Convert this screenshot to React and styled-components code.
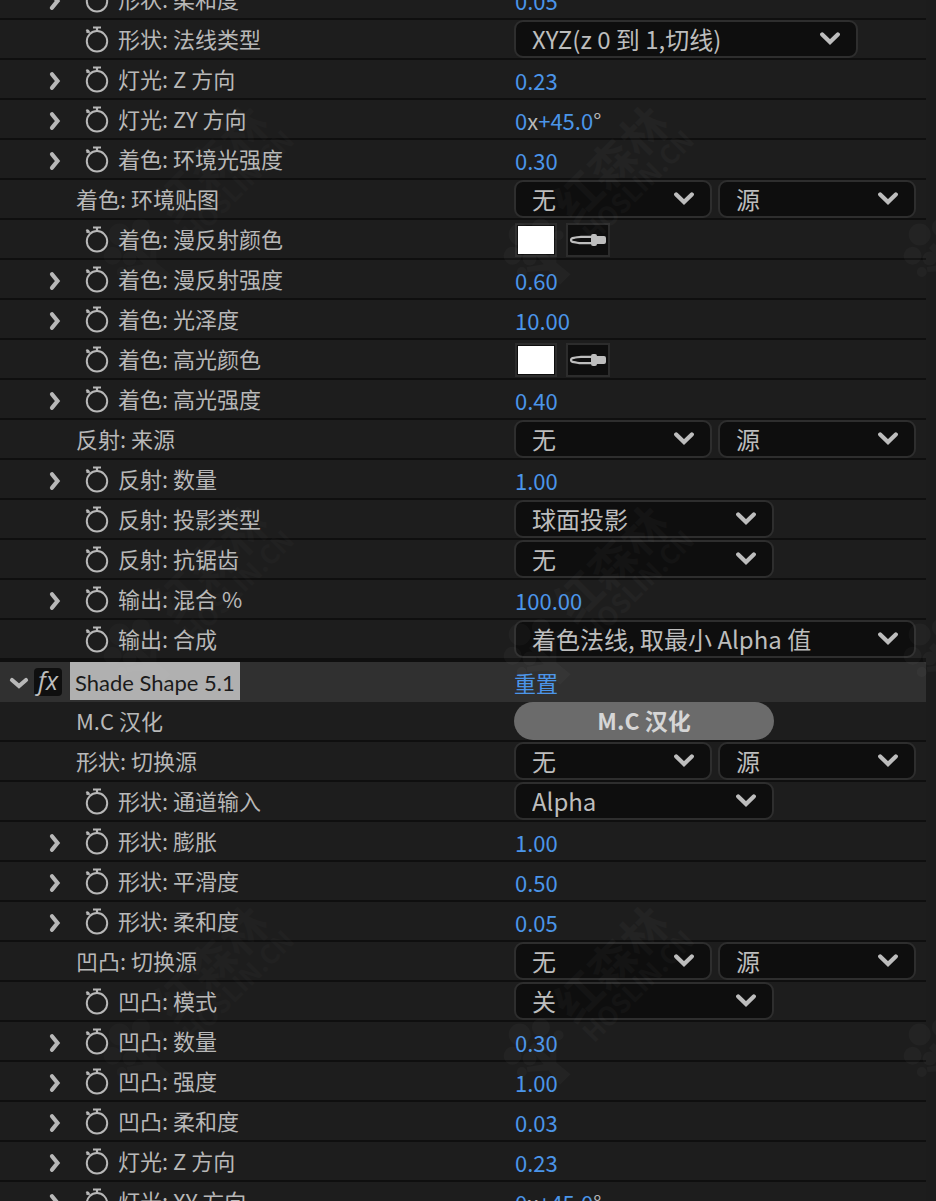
import React, { useState } from 'react';
import styled, { createGlobalStyle } from 'styled-components';

const GlobalStyle = createGlobalStyle`
  * {
    box-sizing: border-box;
  }

  body {
    margin: 0;
    background: #1c1c1c;
    color: #b8b8b8;
    font-family: "Noto Sans CJK SC", sans-serif;
    font-size: 22px;
  }

  button, select, input {
    font: inherit;
    color: inherit;
    margin: 0;
    padding: 0;
    border: 0;
    background: none;
  }
`

const Panel = styled.main`
  position: relative;
  height: 100vh;
  overflow: hidden;
  padding-right: 10px;
`

// the list is scrolled by half a row
const List = styled.div`
  margin-top: -20px;
`

const Row = styled.div`
  display: grid;
  grid-template-columns: 514px 1fr;
  height: 40px;
  background: #1d1d1d;
  border-bottom: 2px solid #0f0f0f;
`

const NameCell = styled.div`
  display: flex;
  align-items: center;
  padding-left: ${props => props.$plain ? '76px' : '48px'};
`

const ValueCell = styled.div`
  display: flex;
  align-items: center;
  gap: ${props => props.$gap || '0'};
  padding: ${props => props.$pad || '0'};
`

const Twirl = styled.button`
  display: flex;
  width: 36px;
  height: 24px;
  visibility: ${props => props.$hidden ? 'hidden' : 'visible'};
`

const Stopwatch = styled.button`
  display: flex;
  width: 34px;
  height: 28px;
`

const Name = styled.label`
  padding-bottom: 2px;
  line-height: 36px;
  white-space: pre;
`

const HotText = styled.button`
  color: #4b95e9;
  line-height: 30px;
  padding-top: 2px;
  cursor: ew-resize;
`

const Unit = styled.span`
  line-height: 30px;
  padding-top: 2px;
`

const SelectBox = styled.span`
  display: grid;
  width: ${props => props.$width};
  height: 38px;
  align-items: center;
`

const SelectInput = styled.select`
  grid-area: 1 / 1;
  appearance: none;
  width: 100%;
  height: 38px;
  padding: 0 48px 0 16px;
  border: 2px solid #2e2e2e;
  border-radius: 9px;
  background: #0e0e0e;
  color: #bdbdbd;
  font-size: 24px;
  line-height: 34px;
`

const SelectArrow = styled.svg`
  grid-area: 1 / 1;
  justify-self: end;
  margin-right: 18px;
  pointer-events: none;
`

const Swatch = styled.input`
  appearance: none;
  width: 42px;
  height: 34px;
  padding: 1px;
  border: 2px solid #2c2c2c;
  background: #0e0e0e;

  &::-webkit-color-swatch-wrapper {
    padding: 0;
  }

  &::-webkit-color-swatch {
    border: 0;
    border-radius: 0;
  }
`

const Eyedropper = styled.button`
  display: flex;
  align-items: center;
  justify-content: center;
  width: 44px;
  height: 34px;
  border: 2px solid #2c2c2c;
  background: #0e0e0e;
`

const PillButton = styled.button`
  width: 260px;
  height: 38px;
  padding-bottom: 2px;
  border-radius: 19px;
  background: #6b6b6b;
  color: #d6d6d6;
  font-size: 23px;
  font-weight: 700;
  line-height: 36px;
`

const EffectRow = styled.div`
  display: grid;
  grid-template-columns: 514px 1fr;
  height: 42px;
  background: #303030;
  border-top: 2px solid #0f0f0f;
`

const EffectHead = styled.div`
  display: flex;
  padding-left: 9px;
`

const EffectTwirl = styled.button`
  display: flex;
  align-items: center;
  width: 25px;
  height: 42px;
`

const FxBadge = styled.button`
  width: 28px;
  height: 28px;
  margin: 6px 8px 0 0;
  padding-bottom: 4px;
  border-radius: 4px;
  background: #0f0f0f;
  color: #bdbdbd;
  font-family: "Open Sans", sans-serif;
  font-size: 25px;
  font-style: italic;
  line-height: 24px;
`

const EffectName = styled.h2`
  margin: 0;
  height: 38px;
  padding: 0 5px;
  background: #b0b0b0;
  color: #1b1b1b;
  font-family: Lato, sans-serif;
  font-size: 22px;
  font-weight: 400;
  line-height: 42px;
  white-space: nowrap;
`

const Mark = styled.div`
  position: absolute;
  left: ${props => props.$x}px;
  top: ${props => props.$y}px;
  width: 250px;
  height: 80px;
  display: flex;
  align-items: center;
  gap: 8px;
  transform: rotate(-45deg);
  opacity: ${props => props.$opacity};
  color: #fff;
  pointer-events: none;
  user-select: none;
`

const MarkText = styled.div`
  font-size: 46px;
  font-weight: 700;
  line-height: 44px;
`

const MarkUrl = styled.div`
  font-size: 26px;
  font-weight: 700;
  line-height: 28px;
`

const ChevronRight = () => (
  <svg width="14" height="24" viewBox="0 0 14 24" fill="none" stroke="#b8b8b8" strokeWidth="4.200" strokeLinecap="round">
    <path d="M4 7.200 L9.500 14 L4 20.800" />
  </svg>
)

const StopwatchIcon = () => (
  <svg width="28" height="28" viewBox="0 0 28 28" fill="none" stroke="#b8b8b8" strokeWidth="2">
    <circle cx="13" cy="16.300" r="10.200" />
    <path d="M9 2.500 H17 M13 2 V6" strokeWidth="2.200" />
    <path d="M2.400 4.600 L5.600 7.800 M2.600 7.600 L5 5.200" />
  </svg>
)

const ArrowDown = () => (
  <SelectArrow width="20" height="14" viewBox="0 0 20 14" fill="none" stroke="#bdbdbd" strokeWidth="4.200" strokeLinecap="round">
    <path d="M2.200 2.400 L10 10 L17.800 2.400" />
  </SelectArrow>
)

const DropperIcon = () => (
  <svg width="38" height="14" viewBox="0 0 38 14">
    <path d="M22 3.800 H12 C9 3.800 8 4.600 5 4.800 Q2 5 2 7 Q2 9 5 9.200 C8 9.400 9 10.200 12 10.200 H22" fill="none" stroke="#bdbdbd" strokeWidth="2.200" />
    <path d="M22 3 q0 -2 2 -2 h2 q2 0 2 2 h7 q2 0 2 2 v4 q0 2 -2 2 h-7 q0 2 -2 2 h-2 q-2 0 -2 -2 z" fill="#bdbdbd" />
  </svg>
)

const Dropdown = ({ id, label, value, width }) => (
  <SelectBox $width={width}>
    <SelectInput id={id} aria-label={label} defaultValue={value}>
      <option>{value}</option>
    </SelectInput>
    <ArrowDown />
  </SelectBox>
)

const Watermark = ({ x, y, opacity }) => (
  <Mark $x={x} $y={y} $opacity={opacity} aria-hidden="true">
    <svg width="74" height="80" viewBox="0 0 70 80" fill="#fff">
      <circle cx="34" cy="14" r="11" />
      <circle cx="14" cy="24" r="9" />
      <circle cx="54" cy="24" r="9" />
      <circle cx="24" cy="38" r="7" />
      <circle cx="45" cy="38" r="7" />
      <circle cx="9" cy="42" r="5" />
      <circle cx="61" cy="42" r="5" />
      <path d="M31 30 h7 l1 22 l14 -12 l3 4 l-16 16 l2 18 h-15 l2 -18 l-16 -14 l3 -4 l14 10 z" />
    </svg>
    <div>
      <MarkText>红森林</MarkText>
      <MarkUrl>HOSLIN.CN</MarkUrl>
    </div>
  </Mark>
)

const Value = ({ id, row }) => {
  const [color, setColor] = useState('#ffffff');

  switch (row.type) {
    case 'number':
      return <HotText id={id}>{row.value}</HotText>
    case 'angle':
      return (
        <>
          <HotText id={id}>0</HotText>
          <Unit>x</Unit>
          <HotText>+45.0</HotText>
          <Unit>°</Unit>
        </>
      )
    case 'layer':
      return (
        <>
          <Dropdown id={id} label={row.name} value="无" width="198px" />
          <Dropdown id={id + '-source'} label={row.name + ' 源'} value="源" width="198px" />
        </>
      )
    case 'color':
      return (
        <>
          <Swatch id={id} type="color" value={color} onChange={e => setColor(e.target.value)} />
          <Eyedropper aria-label="吸管"><DropperIcon /></Eyedropper>
        </>
      )
    case 'button':
      return <PillButton id={id}>{row.value}</PillButton>
    default:
      return <Dropdown id={id} label={row.name} value={row.value} width={row.width} />
  }
}

const gaps = { layer: '6px', color: '9px' }
const pads = { number: '0 0 0 1px', angle: '0 0 0 1px', color: '2px 0 0 1px' }

const Property = ({ id, row }) => {
  const plain = row.type === 'layer' || row.type === 'button';
  const scrub = row.type === 'number' || row.type === 'angle';

  return (
    <Row>
      <NameCell $plain={plain}>
        {!plain && (
          <>
            <Twirl $hidden={!scrub} aria-label="展开" aria-expanded="false"><ChevronRight /></Twirl>
            <Stopwatch aria-label="关键帧"><StopwatchIcon /></Stopwatch>
          </>
        )}
        <Name htmlFor={id}>{row.name}</Name>
      </NameCell>
      <ValueCell $gap={gaps[row.type]} $pad={pads[row.type]}>
        <Value id={id} row={row} />
      </ValueCell>
    </Row>
  )
}

const firstEffect = [
  { name: '形状: 柔和度', type: 'number', value: '0.05' },
  { name: '形状: 法线类型', type: 'select', value: 'XYZ(z 0 到 1,切线)', width: '344px' },
  { name: '灯光: Z 方向', type: 'number', value: '0.23' },
  { name: '灯光: ZY 方向', type: 'angle' },
  { name: '着色: 环境光强度', type: 'number', value: '0.30' },
  { name: '着色: 环境贴图', type: 'layer' },
  { name: '着色: 漫反射颜色', type: 'color' },
  { name: '着色: 漫反射强度', type: 'number', value: '0.60' },
  { name: '着色: 光泽度', type: 'number', value: '10.00' },
  { name: '着色: 高光颜色', type: 'color' },
  { name: '着色: 高光强度', type: 'number', value: '0.40' },
  { name: '反射: 来源', type: 'layer' },
  { name: '反射: 数量', type: 'number', value: '1.00' },
  { name: '反射: 投影类型', type: 'select', value: '球面投影', width: '260px' },
  { name: '反射: 抗锯齿', type: 'select', value: '无', width: '260px' },
  { name: '输出: 混合 %', type: 'number', value: '100.00' },
  { name: '输出: 合成', type: 'select', value: '着色法线, 取最小 Alpha 值', width: '402px' },
]

const secondEffect = [
  { name: 'M.C 汉化', type: 'button', value: 'M.C 汉化' },
  { name: '形状: 切换源', type: 'layer' },
  { name: '形状: 通道输入', type: 'select', value: 'Alpha', width: '260px' },
  { name: '形状: 膨胀', type: 'number', value: '1.00' },
  { name: '形状: 平滑度', type: 'number', value: '0.50' },
  { name: '形状: 柔和度', type: 'number', value: '0.05' },
  { name: '凹凸: 切换源', type: 'layer' },
  { name: '凹凸: 模式', type: 'select', value: '关', width: '260px' },
  { name: '凹凸: 数量', type: 'number', value: '0.30' },
  { name: '凹凸: 强度', type: 'number', value: '1.00' },
  { name: '凹凸: 柔和度', type: 'number', value: '0.03' },
  { name: '灯光: Z 方向', type: 'number', value: '0.23' },
  { name: '灯光: XY 方向', type: 'angle' },
]

const marks = [0, 400, 800]

const App = () => (
  <>
    <GlobalStyle />
    <Panel>
      <List>
        {firstEffect.map((row, i) => <Property key={i} id={'a' + i} row={row} />)}
        <EffectRow>
          <EffectHead>
            <EffectTwirl aria-label="折叠" aria-expanded="true">
              <svg width="20" height="14" viewBox="0 0 20 14" fill="none" stroke="#b8b8b8" strokeWidth="4.200" strokeLinecap="round">
                <path d="M3 4 L10 10 L17 4" />
              </svg>
            </EffectTwirl>
            <FxBadge>fx</FxBadge>
            <EffectName>Shade Shape 5.1</EffectName>
          </EffectHead>
          <ValueCell $pad="0 0 4px">
            <HotText>重置</HotText>
          </ValueCell>
        </EffectRow>
        {secondEffect.map((row, i) => <Property key={i} id={'b' + i} row={row} />)}
      </List>
      {marks.map(y => (
        <React.Fragment key={y}>
          <Watermark x={76} y={y + 150} opacity={0.015} />
          <Watermark x={476} y={y + 150} opacity={0.025} />
          <Watermark x={876} y={y + 150} opacity={0.025} />
        </React.Fragment>
      ))}
    </Panel>
  </>
)

export default App;
